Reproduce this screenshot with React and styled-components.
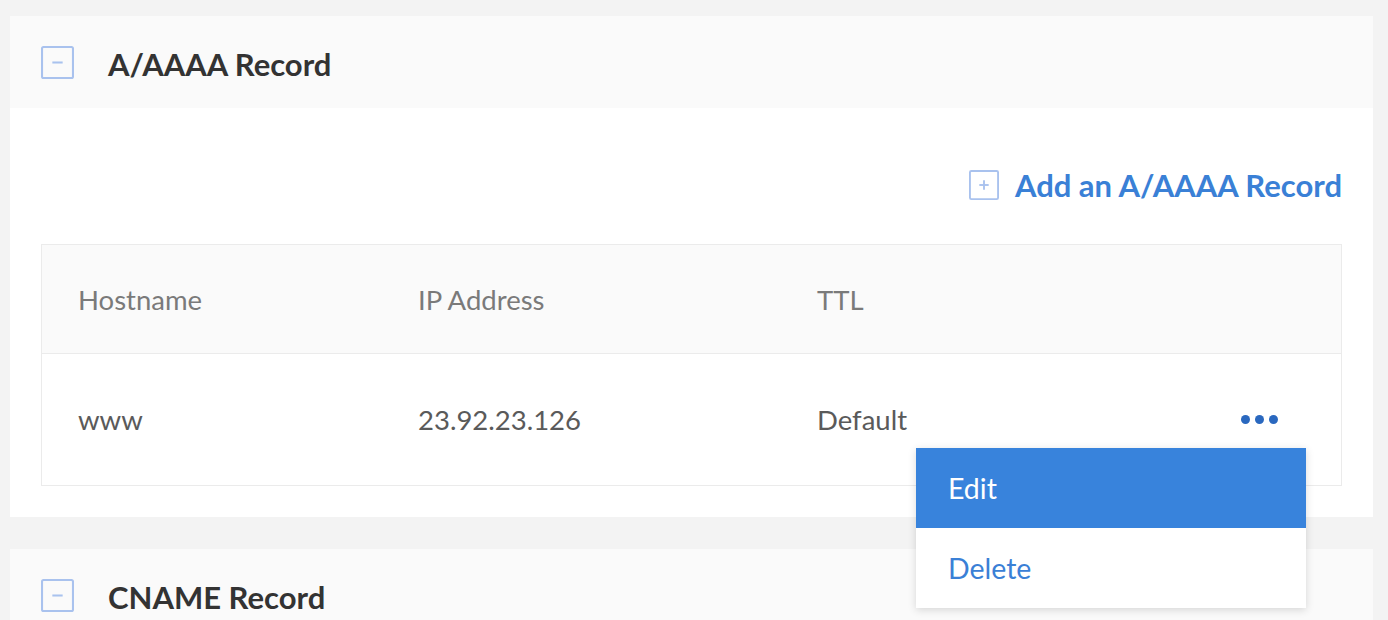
import React from 'react';
import styled, { createGlobalStyle } from 'styled-components';

const GlobalStyle = createGlobalStyle`
  body {
    margin: 0;
    background: #f3f3f3;
    font-family: Lato, 'Open Sans', sans-serif;
  }
`;

const Page = styled.div`
  display: flex;
  flex-direction: column;
  gap: 32px;
  padding: 16px 15px 0 10px;
  height: 620px;
  box-sizing: border-box;
  overflow: hidden;
`;

const Card = styled.section`
  background: #fff;
`;

const CardHeader = styled.div`
  display: flex;
  align-items: center;
  gap: 34px;
  height: 92px;
  padding: 0 31px;
  background: #fafafa;
`;

const Title = styled.h2`
  margin: 0;
  padding-top: 3px;
  font-size: 31px;
  font-weight: 700;
  color: #333;
`;

const CardBody = styled.div`
  padding: 58px 31px 31px;
`;

const Toolbar = styled.div`
  display: flex;
  justify-content: flex-end;
  margin-bottom: 40px;
`;

const AddLink = styled.a`
  display: flex;
  align-items: center;
  gap: 16px;
  font-size: 31px;
  font-weight: 700;
  color: #3a80d6;
  text-decoration: none;
  cursor: pointer;
`;

const Table = styled.div`
  border: 1px solid #ebebeb;
  position: relative;
`;

const Row = styled.div`
  display: grid;
  grid-template-columns: 340px 399px 1fr 100px;
  align-items: center;
  height: ${p => (p.head ? '108px' : '131px')};
  padding-left: 36px;
  background: ${p => (p.head ? '#fafafa' : '#fff')};
  border-top: ${p => (p.head ? 'none' : '1px solid #ebebeb')};
  font-size: 27.5px;
  color: ${p => (p.head ? '#7a7a7a' : '#5a5a5a')};
`;

const Dots = styled.div`
  display: flex;
  gap: 5px;
  span {
    width: 9px;
    height: 9px;
    border-radius: 50%;
    background: #2a68bf;
  }
`;

const Menu = styled.ul`
  position: absolute;
  left: 874px;
  top: 203px;
  width: 390px;
  margin: 0;
  padding: 0;
  list-style: none;
  background: #fff;
  box-shadow: 0 2px 8px rgba(0, 0, 0, 0.15);
  z-index: 2;
`;

const MenuItem = styled.li`
  display: flex;
  align-items: center;
  height: 80px;
  padding-left: 32px;
  font-size: 28.5px;
  color: ${p => (p.active ? '#fff' : '#3a80d6')};
  background: ${p => (p.active ? '#3883dc' : '#fff')};
`;

const BoxIcon = ({ plus, size = 32 }) => (
  <svg width={size} height={size} viewBox="0 0 32 32" fill="none">
    <rect x="1" y="1" width="30" height="30" rx="1.5" stroke="#a9c2ee" strokeWidth="2" />
    <line x1="11" y1="16" x2="21" y2="16" stroke="#a9c2ee" strokeWidth="2" />
    {plus && <line x1="16" y1="11" x2="16" y2="21" stroke="#a9c2ee" strokeWidth="2" />}
  </svg>
);

const App = () => (
  <>
    <GlobalStyle />
    <Page>
      <Card>
        <CardHeader>
          <BoxIcon size={33} />
          <Title>A/AAAA Record</Title>
        </CardHeader>
        <CardBody>
          <Toolbar>
            <AddLink>
              <BoxIcon plus size={30} />
              Add an A/AAAA Record
            </AddLink>
          </Toolbar>
          <Table>
            <Row head>
              <span>Hostname</span>
              <span>IP Address</span>
              <span>TTL</span>
              <span />
            </Row>
            <Row>
              <span>www</span>
              <span>23.92.23.126</span>
              <span>Default</span>
              <Dots>
                <span />
                <span />
                <span />
              </Dots>
            </Row>
            <Menu>
              <MenuItem active>Edit</MenuItem>
              <MenuItem>Delete</MenuItem>
            </Menu>
          </Table>
        </CardBody>
      </Card>
      <Card>
        <CardHeader>
          <BoxIcon size={33} />
          <Title>CNAME Record</Title>
        </CardHeader>
      </Card>
    </Page>
  </>
);

export default App;
